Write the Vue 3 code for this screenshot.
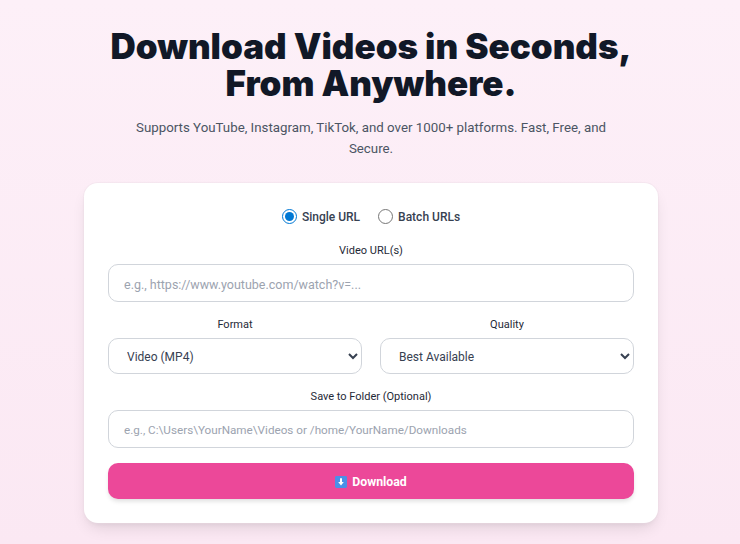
<script setup>
import { ref } from 'vue'
const mode = ref('single')
const format = ref('mp4')
const quality = ref('best')
</script>

<template>
  <main class="page">
    <header class="hero">
      <h1>Download Videos in Seconds,<br />From Anywhere.</h1>
      <p>Supports YouTube, Instagram, TikTok, and over 1000+ platforms. Fast, Free, and Secure.</p>
    </header>
    <form class="card" @submit.prevent>
      <div class="modes">
        <label class="mode"><input v-model="mode" type="radio" value="single" />Single URL</label>
        <label class="mode"><input v-model="mode" type="radio" value="batch" />Batch URLs</label>
      </div>
      <div class="field url">
        <label for="url">Video URL(s)</label>
        <input id="url" class="control text" type="text" placeholder="e.g., https://www.youtube.com/watch?v=..." />
      </div>
      <div class="row">
        <div class="field">
          <label for="format">Format</label>
          <select id="format" v-model="format" class="control pick">
            <option value="mp4">Video (MP4)</option>
            <option value="mp3">Audio (MP3)</option>
          </select>
        </div>
        <div class="field">
          <label for="quality">Quality</label>
          <select id="quality" v-model="quality" class="control pick">
            <option value="best">Best Available</option>
            <option value="720">720p</option>
          </select>
        </div>
      </div>
      <div class="field folder">
        <label for="folder">Save to Folder (Optional)</label>
        <input id="folder" class="control text" type="text" placeholder="e.g., C:\Users\YourName\Videos or /home/YourName/Downloads" />
      </div>
      <button class="go" type="submit">
        <svg class="emoji" viewBox="0 0 12 12" width="12" height="12" aria-hidden="true">
          <rect width="12" height="12" rx="1.4" fill="#4a90e8" />
          <path d="M5 2.2h2v3.9h1.8L6 9.6 3.2 6.1H5z" fill="#fff" />
        </svg>
        Download
      </button>
    </form>
  </main>
</template>

<style>
html, body { margin: 0; }
body { background: #fdeef7; }
</style>

<style scoped>
.page {
  box-sizing: border-box;
  height: 544px;
  overflow: hidden;
  padding: 28px 82px 0 84px;
  background: linear-gradient(180deg, #fdf0f8 0%, #fbe8f3 100%);
  font-family: Roboto, "Noto Sans", sans-serif;
  color: #374151;
}
.hero { text-align: center; }
h1 {
  margin: 0;
  font-family: Inter, "Noto Sans", sans-serif;
  font-size: 35px;
  line-height: 37px;
  font-weight: 900;
  color: #111827;
}
.hero p {
  margin: 15px 0 0;
  padding: 0 48px;
  font-size: 13.3px;
  line-height: 21px;
  color: #4b5563;
}
.card {
  box-sizing: border-box;
  margin-top: 24px;
  height: 340px;
  padding: 24px;
  background: #fff;
  border-radius: 14px;
  box-shadow: 0 0 0 1px rgba(236, 220, 230, 0.35), 0 8px 16px -4px rgba(0, 0, 0, 0.12), 0 3px 6px -3px rgba(0, 0, 0, 0.08);
  display: flex;
  flex-direction: column;
}
.modes { display: flex; justify-content: center; gap: 18px; height: 18px; padding-top: 1px; }
.mode {
  display: flex;
  align-items: center;
  gap: 5px;
  font-size: 12px;
  font-weight: 500;
  color: #374151;
  accent-color: #0078d4;
}
.mode input { margin: -2px 0 0; width: 15px; height: 15px; }
.field { display: flex; flex-direction: column; flex: 1; min-width: 0; }
.field label {
  text-align: center;
  font-size: 11px;
  font-weight: 400;
  line-height: 15px;
  padding-top: 1px;
  margin-bottom: 6px;
  color: #1f2937;
}
.url { flex: none; margin-top: 16px; }
.row { display: flex; gap: 18px; margin-top: 14px; }
.folder { flex: none; margin-top: 14px; }
.control {
  box-sizing: border-box;
  width: 100%;
  background: #fff;
  border: 1px solid #d1d5db;
  border-radius: 10px;
  font-family: inherit;
  font-size: 12px;
  color: #374151;
}
.text { height: 38px; padding: 2px 15px 0; }
.url .text { font-size: 12.5px; }
.folder .text { font-size: 11.7px; }
.text::placeholder { color: #9ca3af; opacity: 1; }
.pick { height: 36px; padding: 2px 14px 0; }
.go {
  margin-top: 15px;
  height: 36px;
  padding: 2px 0 0;
  border: 0;
  border-radius: 10px;
  background: #ec4899;
  color: #fff;
  font-family: inherit;
  font-size: 12.3px;
  font-weight: 700;
  display: flex;
  align-items: center;
  justify-content: center;
  gap: 5px;
  box-shadow: 0 3px 5px -1px rgba(0, 0, 0, 0.14);
}
</style>
